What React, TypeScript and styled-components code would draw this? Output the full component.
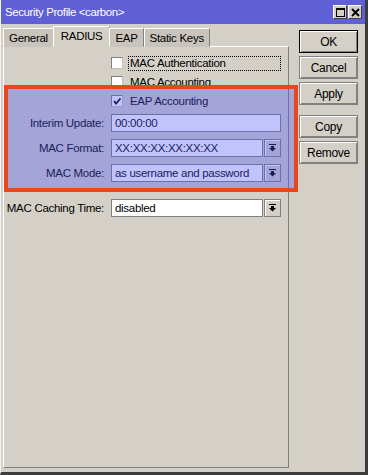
import styled, { createGlobalStyle } from "styled-components";

const GlobalStyle = createGlobalStyle`
  body {
    margin: 0;
    font-family: "Liberation Sans", Arial, sans-serif;
    font-size: 11.5px;
    letter-spacing: -0.3px;
    color: #000;
  }
`;

const DropArrow = () => (
  <svg width="7" height="8" viewBox="0 0 7 8">
    <rect x="0" y="0" width="7" height="1" fill="#000" />
    <rect x="2" y="2" width="3" height="2" fill="#000" />
    <polygon points="0,4 7,4 3.5,7.5" fill="#000" />
  </svg>
);

const CheckMark = () => (
  <svg width="10" height="10" viewBox="0 0 10 10">
    <polyline points="2,5 4,7.5 8.5,2.5" fill="none" stroke="#000" strokeWidth="1.8" />
  </svg>
);

const Field = ({ label, value, select }: { label: string; value: string; select?: boolean }) => (
  <FieldRow>
    <FieldLabel>{label}</FieldLabel>
    <InputBox>{value}</InputBox>
    {select && (
      <DropButton>
        <DropArrow />
      </DropButton>
    )}
  </FieldRow>
);

const Check = ({ label, checked, focused }: { label: string; checked?: boolean; focused?: boolean }) => (
  <CheckRow>
    <Box>{checked && <CheckMark />}</Box>
    <CheckText focused={focused}>{label}</CheckText>
  </CheckRow>
);

const App = () => {
  return (
    <>
      <GlobalStyle />
      <Window>
        <TitleBar>
          <span>Security Profile &lt;carbon&gt;</span>
          <TitleButtons>
            <TitleButton>
              <svg width="9" height="9" viewBox="0 0 9 9">
                <rect x="0.5" y="0.5" width="8" height="8" fill="none" stroke="#000" />
                <rect x="0" y="0" width="9" height="2" fill="#000" />
              </svg>
            </TitleButton>
            <TitleButton>
              <svg width="9" height="9" viewBox="0 0 9 9">
                <path d="M1 1 L8 8 M8 1 L1 8" stroke="#000" strokeWidth="2" />
              </svg>
            </TitleButton>
          </TitleButtons>
        </TitleBar>
        <Body>
          <LeftSide>
            <TabStrip>
              <Tab>General</Tab>
              <Tab active>RADIUS</Tab>
              <Tab>EAP</Tab>
              <Tab>Static Keys</Tab>
            </TabStrip>
            <Panel>
              <Check label="MAC Authentication" focused />
              <Check label="MAC Accounting" />
              <Check label="EAP Accounting" checked />
              <Field label="Interim Update:" value="00:00:00" />
              <Field label="MAC Format:" value="XX:XX:XX:XX:XX:XX" select />
              <Field label="MAC Mode:" value="as username and password" select />
              <Spacer />
              <Field label="MAC Caching Time:" value="disabled" select />
            </Panel>
          </LeftSide>
          <ButtonColumn>
            <Button isDefault>OK</Button>
            <Button>Cancel</Button>
            <Button>Apply</Button>
            <ButtonGap />
            <Button>Copy</Button>
            <Button>Remove</Button>
          </ButtonColumn>
        </Body>
        <Highlight />
      </Window>
    </>
  );
};

export default App;

const Window = styled.div`
  position: relative;
  box-sizing: border-box;
  width: 368px;
  height: 475px;
  background: #d4d0c8;
  border-left: 1px solid #f4f4f4;
  border-right: 3px solid #3c3c3c;
  border-bottom: 3px solid #3c3c3c;
  display: flex;
  flex-direction: column;
  overflow: hidden;
`;

const TitleBar = styled.div`
  height: 24px;
  background: #5f5fd6;
  color: #fff;
  font-size: 11.5px;
  letter-spacing: -0.4px;
  display: flex;
  align-items: center;
  justify-content: space-between;
  padding: 0 3px 0 4px;
`;

const TitleButtons = styled.div`
  display: flex;
  gap: 1px;
`;

const TitleButton = styled.div`
  width: 14px;
  height: 14px;
  box-sizing: border-box;
  background: #d4d0c8;
  border: 1px solid;
  border-color: #fff #404040 #404040 #fff;
  display: flex;
  align-items: center;
  justify-content: center;
`;

const Body = styled.div`
  flex: 1;
  display: flex;
  padding: 0 0 4px 2px;
`;

const LeftSide = styled.div`
  width: 286px;
  display: flex;
  flex-direction: column;
`;

const TabStrip = styled.div`
  display: flex;
  align-items: flex-end;
  height: 23px;
  position: relative;
  z-index: 1;
  margin-bottom: -1px;
`;

const Tab = styled.div<{ active?: boolean }>`
  box-sizing: border-box;
  height: ${(p) => (p.active ? "21px" : "19px")};
  padding: ${(p) => (p.active ? "3px 7px 0" : "3px 5px 0")};
  margin: ${(p) => (p.active ? "0 -1px" : "0")};
  border: 1px solid;
  border-color: #fff #808080 transparent #fff;
  background: ${(p) => (p.active ? "#d4d0c8" : "#c8c4bc")};
  white-space: nowrap;
`;

const Panel = styled.div`
  flex: 1;
  box-sizing: border-box;
  border: 1px solid;
  border-color: #fff #808080 #808080 #fff;
  padding: 10px 7px 0 0;
  display: flex;
  flex-direction: column;
`;

const CheckRow = styled.div`
  height: 19px;
  display: flex;
  align-items: flex-start;
  margin-left: 107px;
`;

const Box = styled.div`
  width: 12px;
  height: 12px;
  box-sizing: border-box;
  background: #fff;
  border: 1px solid;
  border-color: #808080 #c0c0c0 #c0c0c0 #808080;
  display: flex;
  align-items: center;
  justify-content: center;
`;

const CheckText = styled.div<{ focused?: boolean }>`
  flex: 1;
  margin-left: 5px;
  height: 13px;
  line-height: 12px;
  padding-left: 1px;
  border: 1px dotted ${(p) => (p.focused ? "#000" : "transparent")};
  margin-top: -1px;
`;

const FieldRow = styled.div`
  height: 18px;
  display: flex;
  align-items: center;
  margin-bottom: 7px;
`;

const FieldLabel = styled.div`
  width: 100px;
  text-align: right;
  margin-right: 7px;
  white-space: nowrap;
`;

const InputBox = styled.div`
  flex: 1;
  height: 18px;
  box-sizing: border-box;
  background: #fff;
  border: 1px solid #808080;
  padding-left: 3px;
  line-height: 16px;
  white-space: nowrap;
  overflow: hidden;
`;

const DropButton = styled.div`
  width: 17px;
  height: 18px;
  box-sizing: border-box;
  margin-left: 1px;
  border: 1px solid #808080;
  box-shadow: inset 1px 1px 0 #fff;
  display: flex;
  align-items: center;
  justify-content: center;
`;

const Spacer = styled.div`
  height: 10px;
`;

const ButtonColumn = styled.div`
  display: flex;
  flex-direction: column;
  gap: 3px;
  margin: 6px 0 0 10px;
  width: 59px;
`;

const ButtonGap = styled.div`
  height: 4px;
`;

const Button = styled.div<{ isDefault?: boolean }>`
  height: 23px;
  box-sizing: border-box;
  display: flex;
  align-items: center;
  justify-content: center;
  font-size: 12px;
  border: 1px solid ${(p) => (p.isDefault ? "#000" : "#808080")};
  box-shadow: inset 1px 1px 0 #fff, inset -1px -1px 0 #808080;
`;

const Highlight = styled.div`
  position: absolute;
  left: 3px;
  top: 85px;
  width: 294px;
  height: 107px;
  box-sizing: border-box;
  border: 4px solid #e8461c;
  background: rgba(75, 82, 245, 0.35);
`;
